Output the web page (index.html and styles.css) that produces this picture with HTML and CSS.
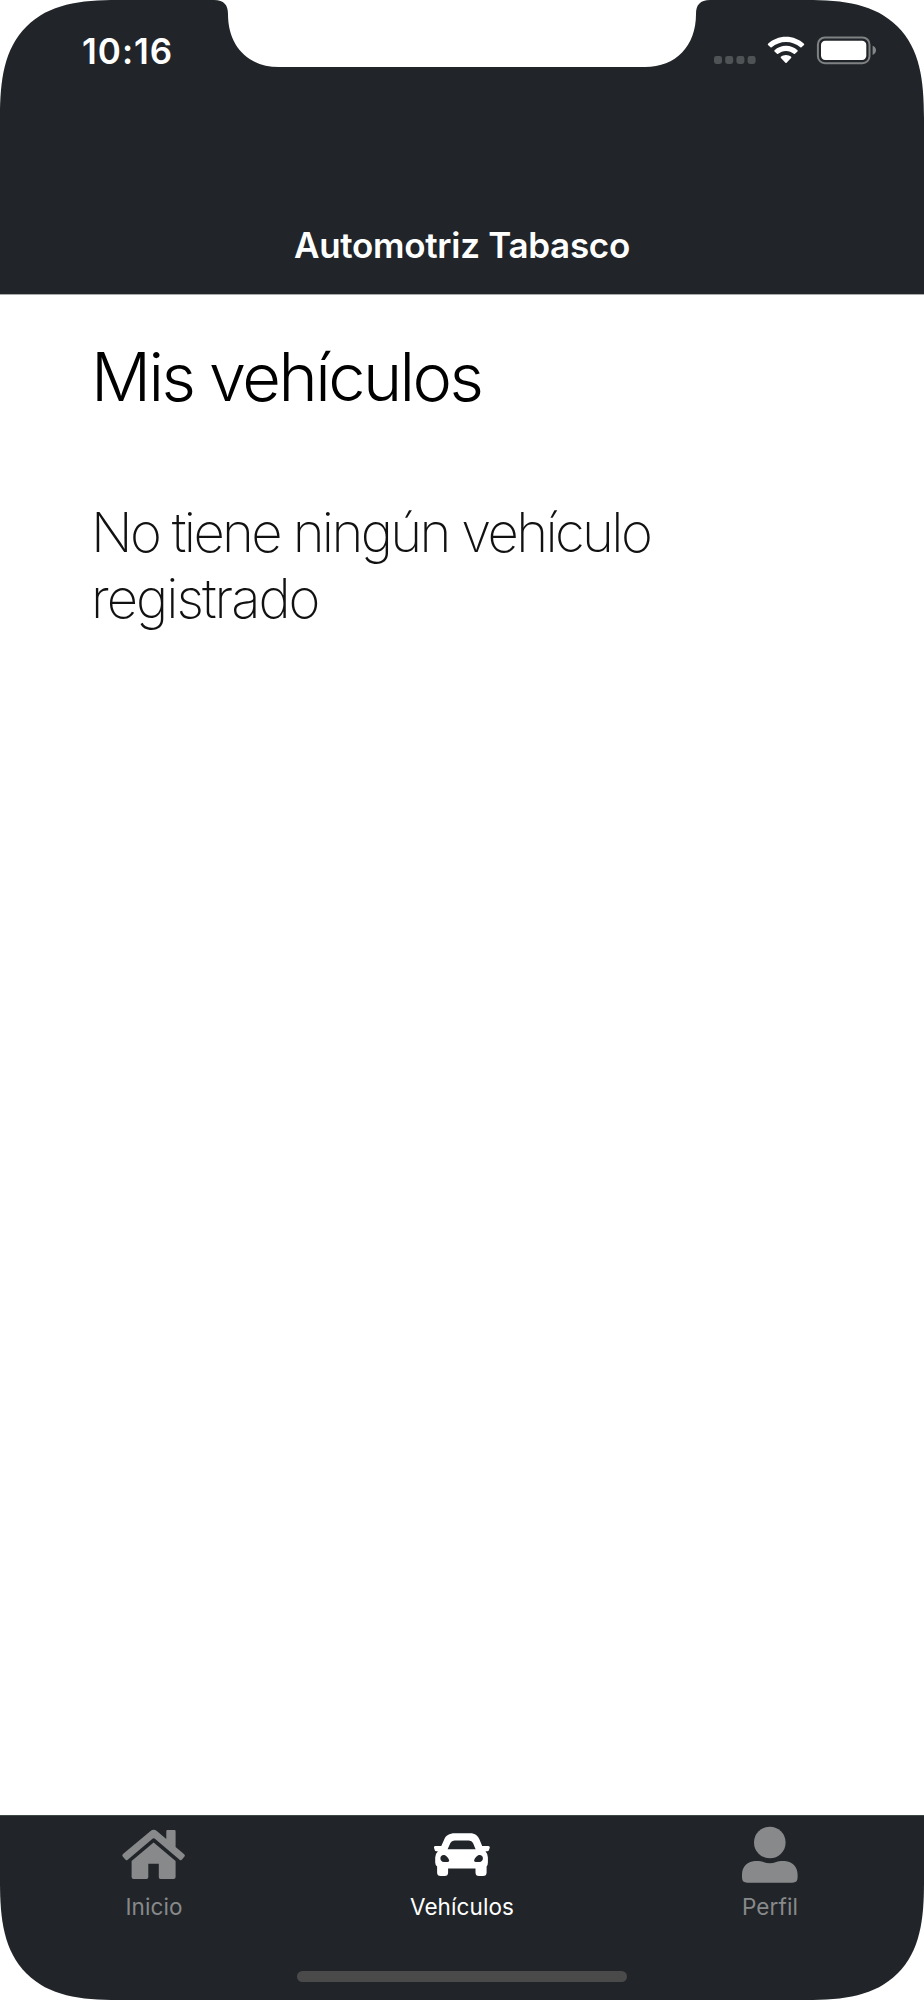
FILE: index.html
```html
<!DOCTYPE html>
<html lang="es">
<head>
<meta charset="utf-8">
<title>Automotriz Tabasco</title>
<link rel="stylesheet" href="styles.css">
</head>
<body>
<div class="phone">
  <header class="header">
    <div class="status">
      <span class="time">10:16</span>
      <div class="indicators">
        <svg class="signal" width="42" height="8" viewBox="0 0 42 8"><g fill="#505355"><rect width="8" height="8" rx="2.4"/><rect x="11.2" width="8" height="8" rx="2.4"/><rect x="22.4" width="8" height="8" rx="2.4"/><rect x="33.6" width="8" height="8" rx="2.4"/></g></svg>
        <svg class="wifi" width="38" height="28" viewBox="767 36 38 28"><g fill="#fff"><path d="M786 36.7C793 36.7 799.400 39.400 804 43.700Q804.500 44.300 804 44.900L801.500 47.300Q800.900 47.800 800.300 47.300C796.400 43.800 791.400 41.900 786 41.900S775.600 43.800 771.700 47.300Q771.100 47.800 770.500 47.300L768 44.900Q767.500 44.300 768 43.700C772.600 39.400 779 36.700 786 36.700Z"/><path d="M786 45.800C790.400 45.800 794.400 47.500 797.500 50.200Q798 50.800 797.500 51.400L795 53.800Q794.400 54.300 793.800 53.800C791.600 52 788.900 50.900 786 50.900S780.400 52 778.200 53.800Q777.600 54.300 777 53.800L774.500 51.400Q774 50.800 774.500 50.200C777.600 47.500 781.600 45.800 786 45.800Z"/><path d="M786 54.900C788 54.900 789.800 55.600 791.100 56.700Q791.600 57.300 791.100 57.900L786.600 62.700Q786 63.200 785.400 62.700L780.900 57.900Q780.400 57.300 780.900 56.700C782.200 55.600 784 54.900 786 54.900Z"/></g></svg>
        <svg class="battery" width="60" height="29" viewBox="816 36 60 29"><rect x="817.900" y="37.400" width="51.600" height="25.800" rx="7" fill="none" stroke="#7f8183" stroke-width="2"/><rect x="821" y="40.700" width="45.300" height="19.300" rx="4.200" fill="#fff"/><path d="M872.600 45.800C874.800 46.600 876 48.300 876 50.300S874.800 54 872.600 54.900Z" fill="#858789"/></svg>
      </div>
    </div>
    <h1 class="title">Automotriz Tabasco</h1>
  </header>
  <main class="content">
    <h2 class="heading">Mis vehículos</h2>
    <p class="message">No tiene ningún vehículo<br><span class="message-end">registrado</span></p>
  </main>
  <footer class="footer">
    <nav class="tabs">
      <a class="tab">
        <svg width="66" height="60" viewBox="121 1825 66 60"><g fill="#88898a"><path d="M150.600 1830.900Q153.700 1828.800 156.800 1830.900L166.300 1838.900V1831.300Q166.300 1830.100 167.500 1830.100H174.400Q175.600 1830.100 175.600 1831.300V1847L184.200 1854.200Q185.500 1855.300 184.500 1856.600L182 1859.600Q180.900 1860.800 179.600 1859.700L155.200 1838.900Q153.700 1837.700 152.200 1838.900L127.700 1859.700Q126.400 1860.800 125.300 1859.600L122.700 1856.500Q121.700 1855.200 123 1854.100Z"/><path d="M153.600 1842.500L175.600 1860.900V1876.900Q175.600 1879 173.500 1879H160.600Q158.800 1879 158.800 1877.200V1863.800H148.300V1877.200Q148.300 1879 146.500 1879H133.700Q131.600 1879 131.600 1876.900V1860.900Z"/></g></svg>
        <span class="label">Inicio</span>
      </a>
      <a class="tab active">
        <svg width="66" height="60" viewBox="429 1825 66 60"><path fill="#fff" fill-rule="evenodd" d="M455 1833.300H470C475.300 1833.300 478 1836 479.500 1839.500L482.200 1846H488.300Q490 1846 489.800 1847.500L489 1850Q488.600 1851.200 487.200 1851.200H485.500Q487.900 1853.900 487.900 1857.500V1862.500Q487.900 1865 486.600 1866.500V1872.500Q486.600 1876.100 483 1876.100H479Q475.500 1876.100 475.500 1872.500V1868.600H448.100V1872.500Q448.100 1876.100 444.500 1876.100H440.700Q437.100 1876.100 437.100 1872.500V1866.500Q435.200 1865 435.200 1862.500V1857.500Q435.200 1853.900 437.900 1851.200H436.400Q435 1851.200 434.700 1850L433.900 1847.500Q433.700 1846 435.300 1846H441.300L444.200 1839.500C445.900 1835.600 449 1833.300 455 1833.300ZM454.500 1840.500Q451.500 1840.500 450.400 1843L447.600 1849.300H475.600L473 1843Q471.900 1840.500 468.900 1840.500ZM443.700 1854.900C441.600 1854.900 440.400 1856.300 440.400 1858.200S441.600 1861.900 444 1861.900L447.500 1862C449 1862 449.400 1861.100 449.100 1860.100C448.300 1857.500 446 1854.900 443.700 1854.900ZM479.600 1854.900C477.300 1854.900 475 1857.500 474.200 1860.100C473.900 1861.100 474.300 1862 475.800 1862L479.300 1861.900C481.700 1861.900 482.900 1860.100 482.900 1858.200S481.700 1854.900 479.600 1854.900Z"/></svg>
        <span class="label">Vehículos</span>
      </a>
      <a class="tab">
        <svg width="66" height="60" viewBox="736.500 1825 66 60"><g fill="#88898a"><circle cx="769.300" cy="1842.500" r="15.800"/><path d="M754.300 1861.100C756.800 1860.900 760.300 1860.900 762.800 1862Q769.300 1864.400 775.800 1862C778.300 1860.900 781.800 1860.900 784.300 1861.100C791.800 1861.500 797.100 1867.200 797.100 1874.500V1877.500Q797.100 1882.700 791.800 1882.700H746.800Q741.500 1882.700 741.500 1877.500V1874.500C741.500 1867.200 746.800 1861.500 754.300 1861.100Z"/></g></svg>
        <span class="label">Perfil</span>
      </a>
    </nav>
    <div class="home-indicator"></div>
  </footer>
</div>
</body>
</html>
```

FILE: styles.css
```css
body {
  margin: 0;
  background: #fff;
  font-family: Inter, "Liberation Sans", sans-serif;
}

svg {
  display: block;
  flex: none;
}

.phone {
  display: flex;
  flex-direction: column;
  width: 924px;
  height: 2000px;
}

.header {
  height: 295px;
  box-sizing: border-box;
  border-bottom: 1px solid #a7a9aa;
  background: #212529;
  color: #fff;
  clip-path: path("M0 295V118C0 80 4 49 26.500 26.500C49 4 80 0 118 0H214C224 0 228 5 228 14C228 46 248 67 279 67H645C676 67 696 46 696 14C696 5 700 0 710 0H806C844 0 875 4 897.500 26.500C920 49 924 80 924 118V295Z");
}

.status {
  display: flex;
  justify-content: space-between;
  height: 100px;
  padding: 0 48px 0 82px;
}

.time {
  padding-top: 31px;
  font-size: 35px;
  line-height: 40px;
  font-weight: 600;
  letter-spacing: 1px;
}

.indicators {
  display: flex;
  align-items: flex-start;
  padding-top: 36px;
}

.signal {
  margin: 20px 11px 0 0;
}

.wifi {
  margin-right: 11px;
}

.title {
  margin: 121px 0 0;
  font-size: 35px;
  line-height: 48px;
  font-weight: 600;
  letter-spacing: -0.3px;
  text-align: center;
  white-space: nowrap;
}

.content {
  flex: 1;
  padding: 32px 92px 0 91px;
  white-space: nowrap;
}

.heading {
  margin: 0;
  font-size: 66.700px;
  line-height: 100px;
  font-weight: 300;
  letter-spacing: -2.550px;
  word-spacing: -0.500px;
  color: #000;
}

.message {
  margin: 72px 0 0;
  font-size: 54.400px;
  line-height: 66px;
  font-weight: 200;
  letter-spacing: -2.650px;
  color: #111;
}

.message-end {
  letter-spacing: -2px;
}

.footer {
  box-sizing: border-box;
  height: 185px;
  border-top: 1px solid #3f4745;
  background: #212529;
  clip-path: path("M0 0H924V67C924 105 920 136 897.500 158.500C875 181 844 185 806 185H118C80 185 49 181 26.500 158.500C4 136 0 105 0 67Z");
}

.tabs {
  display: grid;
  grid-template-columns: repeat(3, 1fr);
  height: 155px;
}

.tab {
  display: flex;
  flex-direction: column;
  align-items: center;
  padding-top: 9px;
  color: #88898a;
}

.active {
  color: #fff;
}

.label {
  margin-top: 7px;
  font-size: 22.500px;
  line-height: 30px;
  font-weight: 400;
  letter-spacing: 0.100px;
}

.home-indicator {
  width: 330px;
  height: 11px;
  margin: 0 auto;
  border-radius: 6px;
  background: #4a4a4a;
}
```
